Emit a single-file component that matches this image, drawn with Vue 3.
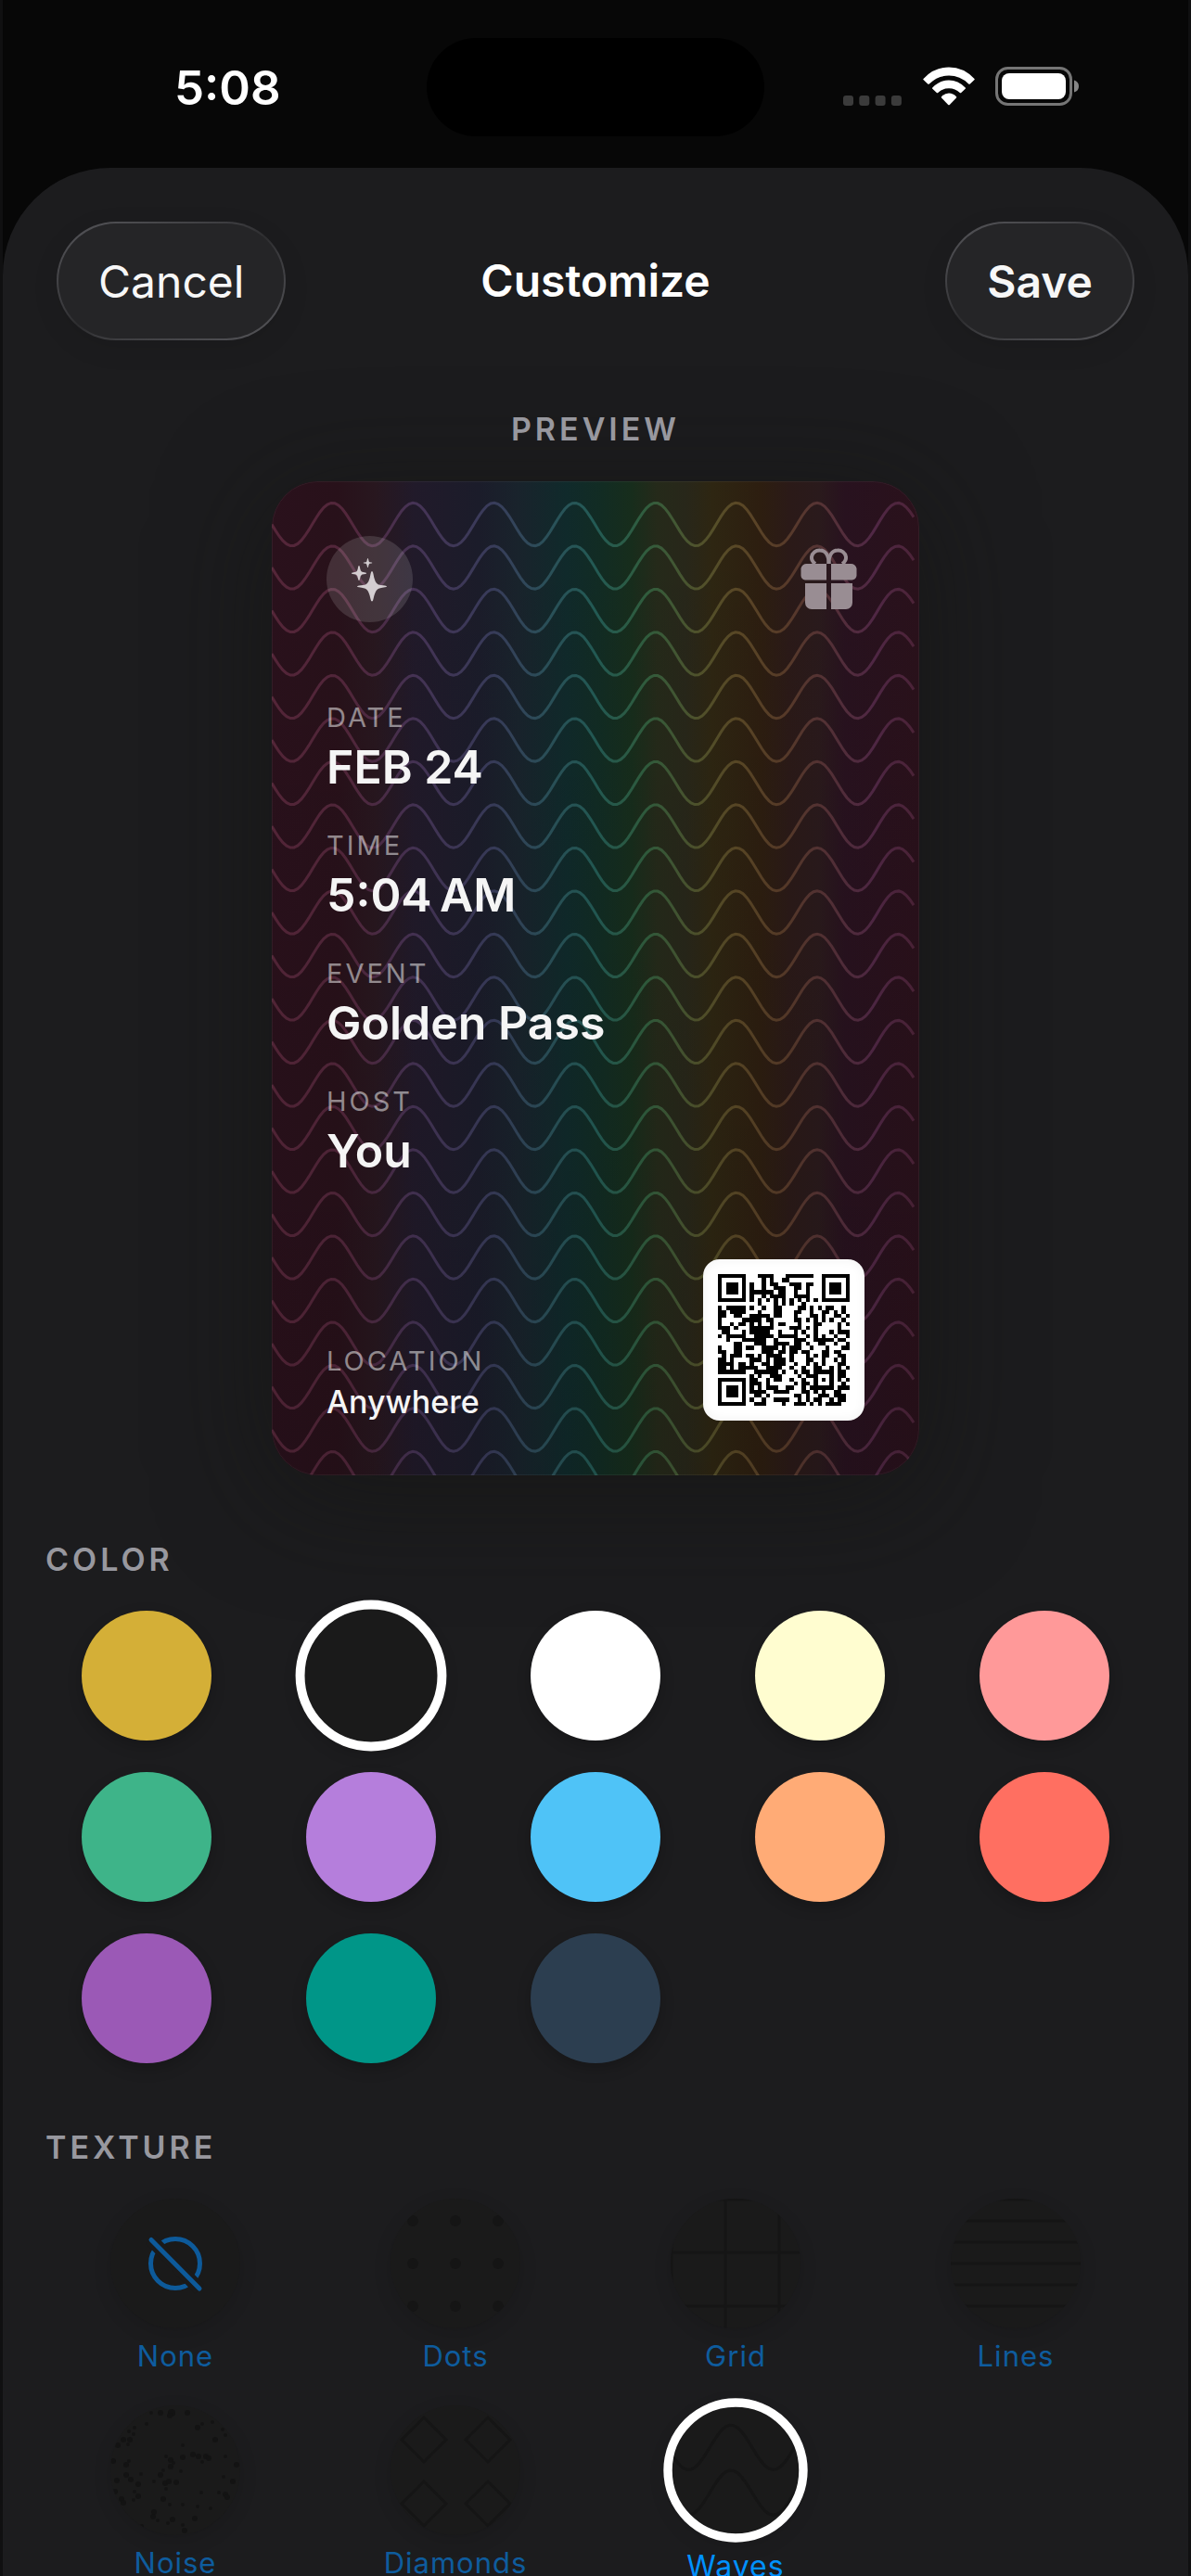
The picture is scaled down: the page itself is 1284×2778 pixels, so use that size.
<script setup>
import { ref } from 'vue'

const CARD_W = 698
const CARD_H = 1072

function sine(mid, width, period, amp) {
  const points = []
  for (let x = 0; x <= width; x += 4) {
    points.push(`${x} ${(mid + amp * Math.sin((2 * Math.PI * x) / period)).toFixed(1)}`)
  }
  return 'M' + points.join('L')
}

const cardWaves = Array.from({ length: 23 }, (_, i) => sine((i + 1) * 46.5, 692, 87.1, 23.2))
const chipWaves = [sine(46.5, 140, 87, 23), sine(93, 140, 87, 23)]

const baseStops = [
  [0, '#2a111c'], [0.1, '#28111a'], [0.16, '#28171f'], [0.22, '#211a2a'], [0.32, '#1b1c2a'],
  [0.38, '#19232c'], [0.455, '#102a2b'], [0.51, '#122c23'], [0.555, '#172d1c'], [0.595, '#252a1a'],
  [0.64, '#28271a'], [0.68, '#2e2612'], [0.755, '#2d1e10'], [0.8, '#2b1a18'], [0.845, '#2a1a1c'],
  [0.885, '#28121f'], [1, '#2a111b']
]
const lineStops = [
  [0, '#5a283c'], [0.12, '#57293f'], [0.22, '#4a365a'], [0.34, '#3c3f60'], [0.42, '#2e545f'],
  [0.5, '#25605a'], [0.58, '#336341'], [0.66, '#56582e'], [0.72, '#5f4c28'], [0.79, '#5d3f2b'],
  [0.86, '#5a343a'], [0.93, '#552a4a'], [1, '#50253a']
]

const fields = [
  { label: 'DATE', value: 'FEB 24' },
  { label: 'TIME', value: '5:04\u2009AM' },
  { label: 'EVENT', value: 'Golden Pass' },
  { label: 'HOST', value: 'You' }
]

const qrRows = [
  '#######...####...#######..#######',
  '#.....#....#.#..##........#.....#',
  '#.###.#.#..#.##...###.##..#.###.#',
  '#.###.#.#..#..###..##.#...#.###.#',
  '#.###.#.######.##..#..#...#.###.#',
  '#.....#.#..#.####..####...#.....#',
  '#######.#.#.#.#.#.#.#.#.#.#######',
  '..........#...#.#.#..#...........',
  '#.#####.#..#..##....##.#.#.##..#.',
  '##.####...#...##...##..#..##.#.#.',
  '##..##..#####.##...#...##.#..##.#',
  '#.....#####.##.....##.#.#.#.#..#.',
  '#..#.##.#.#..#.##...#...##....#.#',
  '###.#...######....###.#.#.....#..',
  '.##...#.#####..#...#.#..#...#.###',
  '#.#####..#####.#####..#.#.#..#..#',
  '..#...######..#....###..#####.##.',
  '....##...###..####.##.#..##..#..#',
  '#...##.##..####.#.###..#...#...##',
  '##..##.....###.##.##.##...##.##..',
  '.#.###.##.#.####..#...#.#.##..##.',
  '##.#....###.#.###.#...##..#..#.#.',
  '####.##.#..##.###..#..#.#.#...##.',
  '##.#.#####..####..#..#..##..#.#.#',
  '#######..######.#..#.##.#####.##.',
  '........#.#..###....#.###...#.##.',
  '#######.##..#.##..#..#..#.#.#.#.#',
  '#.....#.###.#......#.##.#...#..#.',
  '#.###.#.#.#.###..##..#.######.###',
  '#.###.#.####..####...##.#.#..##..',
  '#.###.#..##.#......##.#..###.###.',
  '#.....#.#..#..####..#.#.##..#.##.',
  '#######..###....#..###.#.#.####..'
]
const qrPath = qrRows
  .map((row, y) => [...row].map((c, x) => (c === '#' ? `M${x} ${y}h1v1h-1z` : '')).join(''))
  .join('')

const colors = [
  { name: 'Gold', hex: '#d4af37' },
  { name: 'Black', hex: '#1a1a1a' },
  { name: 'White', hex: '#ffffff' },
  { name: 'Cream', hex: '#fffdd0' },
  { name: 'Rose', hex: '#ff9999' },
  { name: 'Green', hex: '#3eb489' },
  { name: 'Lavender', hex: '#b57edc' },
  { name: 'Sky', hex: '#4fc3f7' },
  { name: 'Peach', hex: '#ffab76' },
  { name: 'Coral', hex: '#ff6f61' },
  { name: 'Purple', hex: '#9b59b6' },
  { name: 'Teal', hex: '#009688' },
  { name: 'Navy', hex: '#2c3e50' }
]
const color = ref('Black')

const textures = ['None', 'Dots', 'Grid', 'Lines', 'Noise', 'Diamonds', 'Waves']
const texture = ref('Waves')

const dotCenters = [24, 70, 116]
const diamonds = [[36, 37], [105, 37], [36, 106], [105, 106]]
const noise = [
  [44, 8, 2], [54, 8, 3], [66, 8, 4], [64, 11, 3], [83, 8, 3], [39, 20, 2], [94, 24, 3], [99, 20, 2], [110, 18, 2],
  [26, 24, 2], [20, 28, 2], [25, 31, 2], [14, 37, 3], [21, 37, 3], [8, 43, 3], [19, 42, 2], [113, 37, 3], [121, 26, 2], [124, 32, 2],
  [78, 43, 2], [60, 55, 2], [65, 59, 3], [68, 62, 2], [65, 66, 3], [78, 56, 3], [89, 53, 3], [95, 55, 3], [103, 55, 3],
  [106, 57, 3], [99, 61, 2], [124, 55, 2], [136, 64, 3], [3, 60, 3], [20, 60, 2], [17, 64, 3], [33, 74, 2], [57, 70, 2],
  [54, 75, 3], [76, 71, 2], [17, 75, 3], [22, 80, 3], [7, 81, 3], [47, 82, 2], [59, 84, 3], [63, 82, 3], [71, 83, 3],
  [30, 85, 3], [122, 77, 2], [132, 82, 3], [60, 90, 2], [5, 93, 3], [26, 93, 2], [30, 98, 3], [25, 102, 2], [12, 101, 3],
  [14, 105, 3], [57, 101, 3], [98, 94, 2], [117, 94, 2], [124, 96, 3], [126, 99, 3], [64, 107, 2], [78, 107, 2], [94, 109, 2],
  [108, 111, 2], [47, 115, 3], [46, 120, 3], [51, 124, 2], [67, 123, 3], [62, 127, 2], [91, 122, 3], [78, 129, 2], [80, 135, 3], [34, 130, 2]
]
</script>

<template>
  <div class="screen">
    <header class="status">
      <div class="time">5:08</div>
      <div class="island"></div>
      <div class="indicators">
        <svg class="cell" width="64" height="42" viewBox="0 0 64 42">
          <rect v-for="i in 4" :key="i" :x="(i - 1) * 17.3" y="31" width="11" height="11" rx="3" fill="#3b3b3b" />
        </svg>
        <svg width="56" height="42" viewBox="0 0 56 42" fill="#fff">
          <path d="M0.5 13Q12 .5 28 .5T55.500 13Q56 13.500 55.500 14L50.800 18.400Q50 19 49.200 18.400Q40 9.500 28 9.500T6.800 18.400Q6 19 5.200 18.400L.5 14Q0 13.500 .5 13Z" />
          <path d="M10.300 22.500Q18 14.500 28 14.500T45.700 22.500Q46.300 23.200 45.700 23.800L41.200 28Q40.500 28.500 39.800 28Q35 23.200 28 23.200T16.200 28Q15.500 28.500 14.800 28L10.300 23.800Q9.700 23.200 10.300 22.500Z" />
          <path d="M20 32.200Q23.500 28.500 28 28.500T36 32.200Q36.500 32.800 36 33.400L28.800 41Q28 41.700 27.200 41L20 33.400Q19.500 32.800 20 32.200Z" />
        </svg>
        <svg width="90" height="42" viewBox="0 0 90 42">
          <rect x="1.500" y="1.500" width="80" height="39" rx="12" fill="none" stroke="#757575" stroke-width="3" />
          <rect x="7" y="7" width="69" height="28" rx="8" fill="#fff" />
          <path d="M85 14.500Q90 16 90 21T85 27.500Z" fill="#858585" />
        </svg>
      </div>
    </header>

    <main class="sheet">
      <nav class="bar">
        <button type="button" class="pill">Cancel</button>
        <h1>Customize</h1>
        <button type="button" class="pill strong">Save</button>
      </nav>

      <h2 class="caption centered">PREVIEW</h2>
      <article class="card">
        <svg class="art" :viewBox="`0 0 ${CARD_W} ${CARD_H}`" preserveAspectRatio="none" aria-hidden="true">
          <defs>
            <linearGradient id="base"><stop v-for="s in baseStops" :key="s[0]" :offset="s[0]" :stop-color="s[1]" /></linearGradient>
            <linearGradient id="line" gradientUnits="userSpaceOnUse" x1="0" y1="0" :x2="CARD_W" y2="0">
              <stop v-for="s in lineStops" :key="s[0]" :offset="s[0]" :stop-color="s[1]" />
            </linearGradient>
            <linearGradient id="shade" x1="0" y1="0" x2="0" y2="1">
              <stop offset="0" stop-opacity="0" /><stop offset="1" stop-opacity="0.12" />
            </linearGradient>
          </defs>
          <rect :width="CARD_W" :height="CARD_H" fill="url(#base)" />
          <path v-for="(d, i) in cardWaves" :key="i" :d="d" fill="none" stroke="url(#line)" stroke-width="3" opacity="0.9" />
          <rect :width="CARD_W" :height="CARD_H" fill="url(#shade)" />
        </svg>

        <div class="content">
          <div class="card-top">
            <div class="badge">
              <svg width="40" height="48" viewBox="0 0 40 48" fill="#d3cdd0">
                <path d="M22 15Q23 15 23.500 18Q25 28 29 29.500Q31 30 36 30.500Q38 31 38 31.500Q38 32 36 32.300Q30 33 28 34.500Q25 37 23.500 45Q23 47.500 22 47.500Q21 47.500 20.500 45Q19 37 16 34.500Q14 33 8 32.300Q6 32 6 31.500Q6 31 8 30.500Q13 30 15 29.500Q19 28 20.500 18Q21 15 22 15Z" />
                <path d="M8 9Q8.800 9 9 11Q9.500 15 11.500 15.800L15 16.400Q16 16.600 16 17.200T15 18L11.500 18.600Q9.500 19.500 9 23Q8.800 25 8 25T7 23Q6.500 19.500 4.500 18.600L1 18Q0 17.800 0 17.200T1 16.400L4.500 15.800Q6.500 15 7 11Q7.200 9 8 9Z" />
                <path d="M17.500 1Q18 1 18.200 2.500Q18.500 5 19.500 5.300L21.500 5.600Q22.300 5.800 22.300 6T21.500 6.500L19.500 6.800Q18.500 7.200 18.200 9.500Q18 11 17.500 11T16.800 9.500Q16.500 7.200 15.500 6.800L13.500 6.500Q12.700 6.300 12.700 6T13.500 5.600L15.500 5.300Q16.500 5 16.800 2.500Q17 1 17.500 1Z" />
              </svg>
            </div>
            <svg class="gift" width="61" height="66" viewBox="0 0 61 66">
              <path d="M7 17H54A6 6 0 0 1 60.500 22V29A5 5 0 0 1 55 34.500H33V17H28V34.500H5A5 5 0 0 1 .5 29V22A6 6 0 0 1 7 17Z" />
              <path d="M5 38H28V66H12A7 7 0 0 1 5 59ZM33 38H56V59A7 7 0 0 1 49 66H33Z" />
              <g class="bow">
                <path d="M16 17Q11.500 14 12 9.500A8.500 8.500 0 0 1 21 2.500C27 2.500 30.500 8 30.500 17" />
                <path d="M45 17Q49.500 14 49 9.500A8.500 8.500 0 0 0 40 2.500C34 2.500 30.500 8 30.500 17" />
              </g>
            </svg>
          </div>
          <dl class="fields">
            <div v-for="f in fields" :key="f.label" class="field">
              <dt>{{ f.label }}</dt>
              <dd>{{ f.value }}</dd>
            </div>
          </dl>
          <div class="card-bottom">
            <dl class="field small">
              <dt>LOCATION</dt>
              <dd>Anywhere</dd>
            </dl>
            <div class="qr">
              <svg viewBox="0 0 33 33" shape-rendering="crispEdges" role="img" aria-label="Pass code"><path :d="qrPath" /></svg>
            </div>
          </div>
        </div>
      </article>

      <section>
        <h2 class="caption">COLOR</h2>
        <div class="swatches">
          <input
            v-for="c in colors" :key="c.name" v-model="color" type="radio" name="color" class="swatch"
            :value="c.name" :aria-label="c.name" :style="{ backgroundColor: c.hex }"
          />
        </div>
      </section>

      <section>
        <h2 class="caption">TEXTURE</h2>
        <div class="textures">
          <button
            v-for="t in textures" :key="t" type="button" class="texture" :class="{ selected: t === texture }"
            :aria-pressed="t === texture" @click="texture = t"
          >
            <span class="chip">
              <svg width="140" height="140" viewBox="0 0 140 140" fill="none" stroke="#151515" stroke-width="3">
                <g v-if="t === 'None'" stroke="#0d5a9a" stroke-width="5" stroke-linecap="round">
                  <circle cx="70" cy="70" r="26.500" />
                  <path d="M43 43.500L96 97.500" stroke="#1a1a1a" stroke-width="14" stroke-linecap="butt" />
                  <path d="M44 44.500L96 97" />
                </g>
                <g v-else-if="t === 'Dots'" fill="#151515" stroke="none">
                  <template v-for="y in dotCenters" :key="y">
                    <circle v-for="x in dotCenters" :key="x" :cx="x" :cy="y" r="6" />
                  </template>
                </g>
                <path v-else-if="t === 'Grid'" d="M1 0V140M59 0V140M117 0V140M0 1H140M0 58H140M0 116H140" />
                <path v-else-if="t === 'Lines'" d="M0 1H140M0 24H140M0 47H140M0 70H140M0 93H140M0 116H140" />
                <g v-else-if="t === 'Noise'" fill="#131313" stroke="none">
                  <circle v-for="(n, i) in noise" :key="i" :cx="n[0]" :cy="n[1]" :r="n[2]" />
                </g>
                <g v-else-if="t === 'Diamonds'">
                  <path v-for="(d, i) in diamonds" :key="i" :d="`M${d[0]} ${d[1] - 24}l24 24l-24 24l-24-24z`" />
                </g>
                <g v-else>
                  <path v-for="(d, i) in chipWaves" :key="i" :d="d" />
                </g>
              </svg>
            </span>
            <span class="name">{{ t }}</span>
          </button>
        </div>
      </section>
    </main>
  </div>
</template>

<style>
body {
  margin: 0;
  background: #070707;
}
</style>

<style scoped>
.screen {
  box-sizing: border-box;
  height: 100vh;
  overflow: hidden;
  display: flex;
  flex-direction: column;
  border: solid #101011;
  border-width: 0 3px;
  background: #070707;
  color: #fff;
  font-family: Inter, "Liberation Sans", sans-serif;
}
button {
  font: inherit;
  border: 0;
  padding: 0;
  cursor: pointer;
}
h1, h2, dl, dt, dd {
  margin: 0;
}
.status {
  flex: none;
  display: grid;
  grid-template-columns: 1fr 364px 1fr;
  height: 140px;
  padding-top: 41px;
}
.time {
  padding-left: 185px;
  padding-top: 22px;
  font-size: 51px;
  line-height: 64px;
  font-weight: 600;
}
.island {
  height: 106px;
  border-radius: 53px;
  background: #000;
}
.indicators {
  display: flex;
  align-items: flex-start;
  justify-content: flex-end;
  gap: 22px;
  padding: 31px 118px 0 0;
}
.sheet {
  flex: 1;
  min-height: 0;
  overflow: hidden;
  box-sizing: border-box;
  padding: 58px 45px 0;
  border-radius: 116px 116px 0 0;
  background: #1c1c1e;
}
.bar {
  display: grid;
  grid-template-columns: 1fr auto 1fr;
  align-items: center;
  margin: 0 13px;
}
.bar h1 {
  font-size: 48px;
  line-height: 60px;
  font-weight: 600;
}
.pill {
  justify-self: start;
  height: 128px;
  padding: 0 43px;
  border-radius: 64px;
  color: #f7f7f7;
  font-size: 48px;
  background:
    linear-gradient(#252527, #252527) padding-box,
    linear-gradient(155deg, #56565a, #3a3a3d 40%, #2d2d2f 50%, #3a3a3d 60%, #56565a) border-box;
  border: 2px solid transparent;
  box-shadow: 0 8px 30px rgba(0, 0, 0, 0.08);
}
.pill.strong {
  justify-self: end;
  font-weight: 600;
}
.caption {
  margin: 69px 0 33px 1px;
  color: #98989f;
  font-size: 34px;
  line-height: 44px;
  font-weight: 600;
  letter-spacing: 4px;
}
.caption.centered {
  margin: 74px 0 34px;
  text-align: center;
}
.card {
  display: grid;
  width: 698px;
  margin: 0 auto;
  overflow: hidden;
  border-radius: 50px;
  box-shadow: 0 20px 120px rgba(20, 20, 18, 0.6);
}
.card > * {
  grid-area: 1 / 1;
}
.art {
  width: 100%;
  height: 100%;
}
.content {
  position: relative;
  box-sizing: border-box;
  min-height: 1072px;
  display: flex;
  flex-direction: column;
  padding: 58px;
  border: 1px solid rgba(255, 255, 255, 0.05);
  border-radius: 50px;
}
.card-top {
  display: flex;
  justify-content: space-between;
}
.badge {
  display: flex;
  align-items: center;
  justify-content: center;
  width: 93px;
  height: 93px;
  border-radius: 50%;
  background: rgba(255, 255, 255, 0.13);
}
.gift {
  margin: 13px 8px 0 0;
  fill: #998d93;
}
.bow {
  fill: none;
  stroke: #998d93;
  stroke-width: 4px;
}
.fields {
  display: flex;
  flex-direction: column;
  gap: 32px;
  margin-top: 83px;
}
.field dt {
  color: rgba(255, 255, 255, 0.5);
  font-size: 29px;
  line-height: 40px;
  font-weight: 400;
  letter-spacing: 3px;
}
.field dd {
  color: #f5f5f5;
  font-size: 50px;
  line-height: 66px;
  font-weight: 600;
}
.field.small dd {
  margin-top: 4px;
  font-size: 34px;
  line-height: 40px;
  font-weight: 500;
}
.card-bottom {
  display: flex;
  align-items: flex-end;
  justify-content: space-between;
  margin-top: auto;
}
.qr {
  box-sizing: border-box;
  width: 174px;
  padding: 16px;
  border-radius: 18px;
  background: #fff;
  box-shadow: inset 0 0 12px rgba(0, 0, 0, 0.06);
}
.qr svg {
  display: block;
  width: 142px;
  height: 142px;
}
.swatches {
  display: grid;
  grid-template-columns: repeat(5, 1fr);
  gap: 34px 22px;
  justify-items: center;
}
.swatch {
  position: relative;
  appearance: none;
  width: 140px;
  height: 140px;
  margin: 0;
  border-radius: 50%;
  box-shadow: 0 6px 16px rgba(0, 0, 0, 0.2);
}
.swatch:checked {
  transform: scale(1.1);
}
.swatch:checked::after,
.selected .chip::after {
  content: "";
  position: absolute;
  inset: -4px;
  border: 9px solid #fff;
  border-radius: 50%;
}
.textures {
  display: grid;
  grid-template-columns: repeat(4, 1fr);
  gap: 33px 20px;
  align-items: start;
}
.texture {
  display: flex;
  flex-direction: column;
  align-items: center;
  gap: 10px;
  background: none;
  color: #0e5c9e;
  font-size: 31px;
  line-height: 40px;
  font-weight: 400;
  letter-spacing: 1px;
}
.texture.selected {
  gap: 14px;
  color: #0091ff;
  font-size: 32px;
}
.chip {
  position: relative;
  width: 140px;
  height: 140px;
  border-radius: 50%;
  background: #1a1a1a;
  box-shadow: 0 6px 20px rgba(0, 0, 0, 0.12);
}
.chip svg {
  display: block;
  border-radius: 50%;
}
.selected .chip {
  transform: scale(1.05);
}
</style>
